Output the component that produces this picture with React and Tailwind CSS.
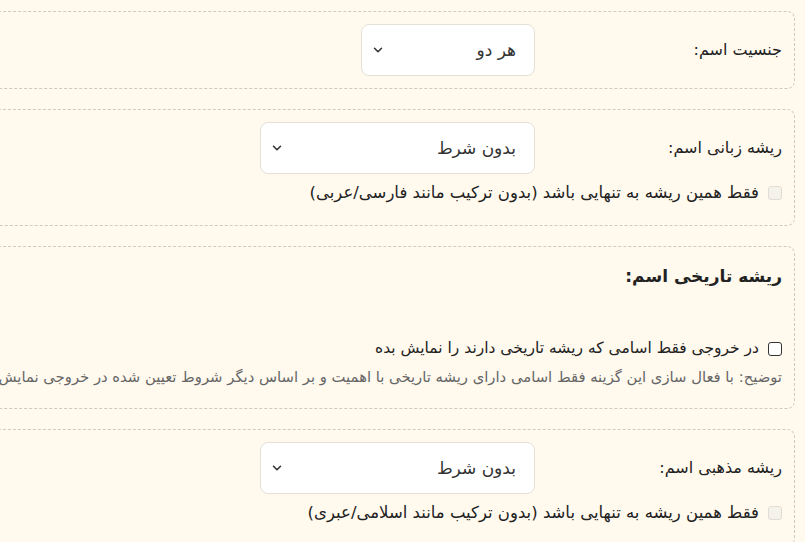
import { ChevronDown } from 'lucide-react';

const font = { fontFamily: '"DejaVu Sans", "Noto Sans", sans-serif' };

const Select = ({ value, width }) => (
  <div
    className={`relative flex h-[52px] items-center rounded-lg border border-[#e6e1d6] bg-white ${width}`}
  >
    <span className="pr-[18px] text-[17px] leading-none text-[#333]">{value}</span>
    <ChevronDown className="absolute left-[9px] top-1/2 h-[14px] w-[14px] -translate-y-1/2 text-[#333]" strokeWidth={2.6} />
  </div>
);

const Check = ({ label, disabled, size = 'text-[16.5px]' }) => (
  <label className={`flex h-[22px] items-center gap-[9px] leading-none text-[#222] ${size}`}>
    <span
      className={`h-[14px] w-[14px] shrink-0 rounded-[3px] border ${
        disabled ? 'border-[#e2ddd3] bg-[#f5f2ec]' : 'border-[#333] bg-white'
      }`}
    />
    <span className="whitespace-nowrap">{label}</span>
  </label>
);

const Card = ({ className = '', children }) => (
  <div className={`rounded-lg border border-dashed border-[#cfcac0] px-3 ${className}`}>{children}</div>
);

export default function App() {
  return (
    <div className="flex min-h-[542px] justify-end overflow-hidden bg-[#fff9ee]" style={font}>
      <div dir="rtl" className="mr-[10px] flex w-[1100px] shrink-0 flex-col gap-5 pt-[11px]">
        <Card className="py-3">
          <div className="flex items-center">
            <div className="w-[247px] shrink-0 text-[16px] text-[#222]">جنسیت اسم:</div>
            <Select value="هر دو" width="w-[174px]" />
          </div>
        </Card>

        <Card className="pb-[21px] pt-3">
          <div className="flex items-center">
            <div className="w-[247px] shrink-0 text-[16px] text-[#222]">ریشه زبانی اسم:</div>
            <Select value="بدون شرط" width="w-[275px]" />
          </div>
          <div className="mt-2">
            <Check disabled label="فقط همین ریشه به تنهایی باشد (بدون ترکیب مانند فارسی/عربی)" />
          </div>
        </Card>

        <Card className="pb-[20px] pt-[17px]">
          <h3 className="text-[17px] font-bold leading-[24px] text-[#222]">ریشه تاریخی اسم:</h3>
          <div className="mt-[50px]">
            <Check size="text-[15.5px]" label="در خروجی فقط اسامی که ریشه تاریخی دارند را نمایش بده" />
          </div>
          <p className="mt-[6px] whitespace-nowrap text-[14.8px] leading-[22px] text-[#666]">
            توضیح: با فعال سازی این گزینه فقط اسامی دارای ریشه تاریخی با اهمیت و بر اساس دیگر شروط تعیین شده در خروجی نمایش داده می شوند.
          </p>
        </Card>

        <Card className="pb-[21px] pt-3">
          <div className="flex items-center">
            <div className="w-[247px] shrink-0 text-[16px] text-[#222]">ریشه مذهبی اسم:</div>
            <Select value="بدون شرط" width="w-[275px]" />
          </div>
          <div className="mt-2">
            <Check disabled label="فقط همین ریشه به تنهایی باشد (بدون ترکیب مانند اسلامی/عبری)" />
          </div>
        </Card>
      </div>
    </div>
  );
}
